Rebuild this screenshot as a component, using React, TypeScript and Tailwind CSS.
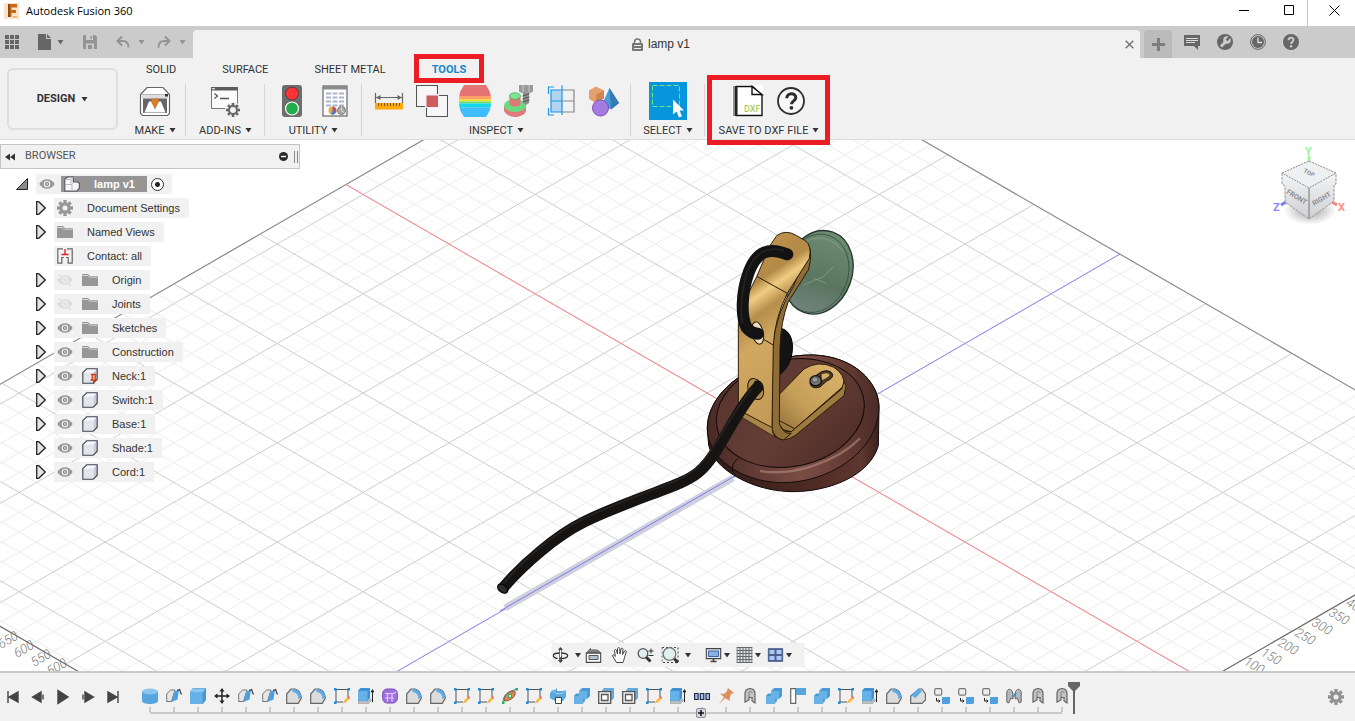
import type { ReactNode } from 'react'

type IconProps = { size?: number; className?: string; box?: string; children?: ReactNode }

function Svg({ size = 16, className = '', box, children }: IconProps) {
  return (
    <svg width={size} height={size} viewBox={box ?? `0 0 ${size} ${size}`} fill="none" className={`shrink-0 ${className}`} aria-hidden="true">
      {children}
    </svg>
  )
}

function Caret({ className = 'text-[#333]' }: { className?: string }) {
  return (
    <svg width="7" height="5" viewBox="0 0 7 5" className={`shrink-0 ${className}`} aria-hidden="true">
      <path d="M0.5 0h6L3.5 4.6z" fill="currentColor" />
    </svg>
  )
}

function Gear({ size = 16, color = '#8f8f8f', hole = '#f1f1f1' }: { size?: number; color?: string; hole?: string }) {
  return (
    <Svg size={size} box="0 0 16 16">
      {[0, 45, 90, 135].map((a) => (
        <rect key={a} x="6.3" y="0" width="3.4" height="16" fill={color} transform={`rotate(${a} 8 8)`} />
      ))}
      <circle cx="8" cy="8" r="5.6" fill={color} />
      <circle cx="8" cy="8" r="2.5" fill={hole} />
    </Svg>
  )
}

function Eye({ hidden = false }: { hidden?: boolean }) {
  const color = hidden ? '#dcdcdc' : '#979797'
  return (
    <Svg>
      <path d="M0.3 8C2 4.8 4.8 3.2 8 3.2S14 4.8 15.7 8C14 11.2 11.2 12.8 8 12.8S2 11.2 0.3 8z" fill={color} />
      <circle cx="8" cy="8" r="2.8" fill={color} stroke="#f1f1f1" strokeWidth="1.1" />
      <circle cx="8" cy="8" r="0.8" fill="#f1f1f1" />
      {hidden && <path d="M2 2.5l12 11.5" stroke="#f1f1f1" strokeWidth="3" />}
      {hidden && <path d="M2 2.5l12 11.5" stroke={color} strokeWidth="1.4" />}
    </Svg>
  )
}

function Folder() {
  return (
    <Svg>
      <path d="M0 2h6l2 2h8v10H0z" fill="#979797" />
      <path d="M0 3.5h6l1.5 1.7H16" stroke="#d4d4d4" />
    </Svg>
  )
}

function Body({ pinned = false }: { pinned?: boolean }) {
  return (
    <Svg>
      <path d="M0.8 4.5L4.5 0.8h10.7V11l-3.7 4.2H.8z" fill="#f6f7fa" />
      <path d="M11.5 4.5l3.7-3.7V11l-3.7 4z" fill="#c9ccd5" />
      <path d="M0.8 4.5h10.7V15H.8z" fill="#e3e5eb" />
      <path d="M0.8 4.7L4.7 0.8h10.5v10.4l-3.9 4H.8z" stroke="#3f4150" strokeWidth="1.1" />
      {pinned && <path d="M9 6.500h5.500M8.500 12h6.500M11.700 12.500V16M10.300 7v5M13.200 7v5" stroke="#c9341c" strokeWidth="1.300" />}
      {pinned && <path d="M11.700 7.200v4.200" stroke="#ffb13b" strokeWidth="1.600" />}
    </Svg>
  )
}

function ContactIcon() {
  return (
    <Svg>
      <path d="M6 .800H.800v14.400h4V9.500h2.200M10 .800h5.200v14.400h-4V9.500H9" stroke="#666" strokeWidth="1.200" />
      <path d="M8 1v5M4.500 6.500h7" stroke="#e01b1b" strokeWidth="1.300" />
    </Svg>
  )
}

function AssemblyIcon() {
  return (
    <Svg>
      <path d="M.800 3.500L3.300 1h6v5h4.500l1.500 1.500V12L12.800 15H.800z" fill="#f8f8fb" stroke="#55565f" strokeWidth="1.100" />
      <path d="M1 8.500h7V15M8 8.500L10 6.300M1 3.500h6v5M7 3.500L9.500 1" stroke="#b7b9c3" />
    </Svg>
  )
}

/* ---------- ribbon icons, 32px ---------- */

const MakeIcon = () => (
  <Svg size={32}>
    <path d="M1.500 9.500L8 2.500h16l6.500 7v19l-2 2h-25l-2-2z" fill="#fff" stroke="#666" strokeWidth="1.200" />
    <path d="M2.500 9.500h27v4h-27z" fill="#dedede" />
    <path d="M2 9.500h28" stroke="#aaa" strokeWidth=".800" />
    <path d="M4 13.500h24V28H4z" fill="#666" />
    <path d="M5.500 27.500l4.500-11h2.500l3.500 8 3.500-8H22l4.500 11z" fill="#fff" />
    <path d="M12.500 13.500h7V18L16 23l-3.500-5z" fill="#dd7d2c" />
    <path d="M26 9h3v2.500h-3z" fill="#333" />
  </Svg>
)

const AddInsIcon = () => (
  <Svg size={32}>
    <path d="M1.500 2.500h26v21h-26z" fill="#fbfbfb" stroke="#777" />
    <path d="M1 2h27v3.500H1z" fill="#5c5c5c" />
    <path d="M2 3.700h3" stroke="#ddd" strokeWidth="1.300" />
    <path d="M4.500 8.500L7.500 11l-3 2.500M10 13.500h9" stroke="#555" strokeWidth="1.300" />
    <circle cx="23" cy="25" r="8" fill="#f1f1f1" />
    {[0, 45, 90, 135].map((a) => (
      <path key={a} d="M23 18v14" stroke="#666" strokeWidth="2.600" transform={`rotate(${a} 23 25)`} />
    ))}
    <circle cx="23" cy="25" r="4" fill="#f4f4f4" stroke="#666" strokeWidth="2" />
  </Svg>
)

const TrafficIcon = () => (
  <Svg size={32}>
    <rect x="6" y="0" width="20" height="32" rx="3" fill="#6d6d6d" />
    <circle cx="16" cy="8.500" r="6.500" fill="#ff3333" stroke="#5a3a3a" />
    <circle cx="16" cy="23.500" r="6.500" fill="#22ad4b" stroke="#fff" strokeWidth="1.200" />
  </Svg>
)

const SheetIcon = () => (
  <Svg size={32}>
    <rect x="4" y="1" width="24" height="30" fill="#fff" stroke="#666" strokeWidth="1.200" />
    <path d="M4 1h24v3.500H4z" fill="#8b8b8b" />
    <path d="M7 8.500h18M7 12.500h18M7 16.500h18M7 20.500h18" stroke="#aab4cf" strokeWidth="2" strokeDasharray="5 1.500" />
    <circle cx="13.500" cy="25.500" r="4" fill="#d9af47" />
    <path d="M13.500 25.500v-4a4 4 0 0 1 3.600 5.800z" fill="#b04d7b" />
    <path d="M13.500 25.500l3.600 1.800a4 4 0 0 1-5 2z" fill="#4a78c9" />
    <circle cx="22.500" cy="25.500" r="4" fill="#aaa" stroke="#777" />
    <path d="M22.500 25.500v-4M22.500 25.500l3 2.500" stroke="#ddd" />
  </Svg>
)

const MeasureIcon = () => (
  <Svg size={32}>
    <path d="M2.500 8v10M29.500 8v10M3 12.500h26" stroke="#666" strokeWidth="1.200" />
    <path d="M3 12.500l4.500-2.500v5zM29 12.500L24.500 10v5z" fill="#666" />
    <path d="M2 18h28v6.500H2z" fill="#ffa90a" />
    <path d="M5.500 18v3M8.500 18v3M11.500 18v3M14.500 18v3M17.500 18v3M20.500 18v3M23.500 18v3M26.500 18v3" stroke="#73572a" />
  </Svg>
)

const InterferenceIcon = () => (
  <Svg size={32}>
    <path d="M.500 .500h21v21H.500z" fill="#f7f7f7" stroke="#555" strokeWidth="1.100" />
    <path d="M10.500 10.500h21v21h-21z" fill="#f7f7f7" stroke="#555" strokeWidth="1.100" />
    <path d="M9 9h14v14H9z" fill="#f1f1f1" />
    <path d="M10.500 10.500h11.500v11.500H10.500z" fill="#cd5c5c" />
  </Svg>
)

const ZebraIcon = () => (
  <Svg size={32}>
    <clipPath id="barrel">
      <path d="M5 0h22l3.500 6c2 6 2 14 0 20L27 32H5L1.500 26c-2-6-2-14 0-20z" />
    </clipPath>
    <g clipPath="url(#barrel)">
      <path d="M0 0h32v11H0z" fill="#e57373" />
      <path d="M0 11h32v3.500H0z" fill="#ff9f68" />
      <path d="M0 14.500h32v2H0z" fill="#f3e11a" />
      <path d="M0 16.500h32v2H0z" fill="#66dc77" />
      <path d="M0 18.500h32v4H0z" fill="#12d7ec" />
      <path d="M0 22.500h32V32H0z" fill="#3fbcfb" />
    </g>
  </Svg>
)

const AccessIcon = () => (
  <Svg size={32}>
    <path d="M2 20v6c2 3.500 6 6 11 6s10-2.500 11-6v-6z" fill="#df7b7b" />
    <ellipse cx="13" cy="20.500" rx="11" ry="6.500" fill="#69dc80" />
    <path d="M7.500 11v8c1 2 3 2.500 5.500 2.500s4.500-.500 5.500-2.500v-8z" fill="#e07878" />
    <ellipse cx="13" cy="11" rx="5.500" ry="3.300" fill="#7de58f" stroke="#43b45b" strokeWidth=".800" />
    <path d="M17 0h14v6.500l-3 1.500h-8l-3-1.500z" fill="#9a9a9a" />
    <path d="M21 0v7M27 0v7" stroke="#c8c8c8" />
    <path d="M21 8h6v10l-3 2-3-2z" fill="#8d8d8d" />
    <path d="M20.500 11l7-2M20.500 14l7-2M20.500 17l7-2" stroke="#555" />
  </Svg>
)

const SectionIcon = () => (
  <Svg size={32}>
    <path d="M17 5h12v22H17M17 16h12" stroke="#888" strokeWidth="1.200" />
    <path d="M6 5h11v22H6z" fill="#b2d4ee" />
    <path d="M17 .500V30M6 5h11v22H6zM6 16h11M3.500 9V2H9M3.500 23v7H9" stroke="#1c96ea" strokeWidth="1.200" />
  </Svg>
)

const ShapesIcon = () => (
  <Svg size={32}>
    <path d="M1 5.500l7-4 8 4v8l-8 4.500-7-4z" fill="#e5a06f" />
    <path d="M8 9.500l8-4v8L8 18z" fill="#cf8653" />
    <path d="M21.500 3l9.500 15-8 6.500-9-5z" fill="#4b9cda" />
    <path d="M21.500 3L31 18l-8 6.500z" fill="#337bb3" />
    <circle cx="12.500" cy="23" r="8" fill="#a57be0" stroke="#8050c2" strokeWidth="1" />
  </Svg>
)

const SelectIcon = () => (
  <Svg size={38}>
    <path d="M0 0h38v38H0z" fill="#0796dc" />
    <path d="M3.500 3.500h27v21h-27z" stroke="#6fe28a" strokeDasharray="5 2" />
    <path d="M24 17.500v15l3.500-3 2.500 6 3-1.300-2.500-5.700h4.500z" fill="#fff" />
  </Svg>
)

const DxfIcon = () => (
  <Svg size={32}>
    <path d="M0 0h31v32H0z" fill="#fff" />
    <path d="M1 1h4v30H1z" fill="#8d8d8d" />
    <path d="M4.500 1.500h16L30 10.500v20H4.500z" fill="#fff" stroke="#111" strokeWidth="1.400" />
    <path d="M20 1.500v8h10z" fill="#fff" stroke="#111" strokeWidth="1.400" />
    <path d="M4.200 1v30" stroke="#222" strokeWidth="2.400" />
    <text x="12" y="27" fontSize="9" fill="#86c440" fontFamily="Roboto, sans-serif">DXF</text>
  </Svg>
)

const HelpIcon = () => (
  <Svg size={32}>
    <circle cx="16" cy="16" r="13" fill="#f8f8f8" stroke="#2d2d2d" strokeWidth="1.800" />
    <path d="M11.800 13.200c0-6 9-5.800 9-.500 0 3-4.300 3.300-4.300 6.500" stroke="#2d2d2d" strokeWidth="3" />
    <circle cx="16.400" cy="22.800" r="1.900" fill="#2d2d2d" />
  </Svg>
)

type Group = { label: string; width: string; highlight?: boolean; tools: { name: string; icon: ReactNode }[] }

const groups: Group[] = [
  { label: 'MAKE', width: 'w-[62px]', tools: [{ name: '3D print', icon: <MakeIcon /> }] },
  { label: 'ADD-INS', width: 'w-[79px]', tools: [{ name: 'Scripts', icon: <AddInsIcon /> }] },
  {
    label: 'UTILITY',
    width: 'w-[97px]',
    tools: [
      { name: 'Status', icon: <TrafficIcon /> },
      { name: 'Parameters', icon: <SheetIcon /> },
    ],
  },
  {
    label: 'INSPECT',
    width: 'w-[269px]',
    tools: [
      { name: 'Measure', icon: <MeasureIcon /> },
      { name: 'Interference', icon: <InterferenceIcon /> },
      { name: 'Curvature', icon: <ZebraIcon /> },
      { name: 'Accessibility', icon: <AccessIcon /> },
      { name: 'Section analysis', icon: <SectionIcon /> },
      { name: 'Component colors', icon: <ShapesIcon /> },
    ],
  },
  { label: 'SELECT', width: 'w-[74px]', tools: [{ name: 'Select', icon: <SelectIcon /> }] },
  {
    label: 'SAVE TO DXF FILE',
    width: 'w-[128px]',
    highlight: true,
    tools: [
      { name: 'Save DXF', icon: <DxfIcon /> },
      { name: 'Help', icon: <HelpIcon /> },
    ],
  },
]

const tabs = ['SOLID', 'SURFACE', 'SHEET METAL', 'TOOLS']

function TitleBar() {
  return (
    <header className="flex h-[26px] items-center bg-white pl-1">
      <Svg size={16} className="mb-1">
        <path d="M0 0h15v16H0z" fill="#fbe3cd" />
        <path d="M4 1h9v3.500H7.500V7H12v3H7.500v4H4z" fill="#c56a1c" />
        <path d="M4 1h2v13H4z" fill="#8f4a12" />
        <path d="M9 13h4v1.500H9z" fill="#f0a868" />
      </Svg>
      <h1 className="ml-1.5 flex-1 pb-1 font-['Open_Sans',sans-serif] text-[11px] text-black">Autodesk Fusion 360</h1>
      <button aria-label="Minimize" className="flex h-full w-[53px] items-start justify-center pt-1.5">
        <Svg size={10}><path d="M0 4.500h10" stroke="#000" /></Svg>
      </button>
      <button aria-label="Maximize" className="flex h-full w-[38px] items-start justify-center border-r border-[#c8c8c8] pt-[5px]">
        <Svg size={10}><path d="M.500 .500h9v9h-9z" stroke="#000" /></Svg>
      </button>
      <button aria-label="Close" className="flex h-full w-[47px] items-start justify-center pt-[5px] pl-1.5">
        <Svg size={11}><path d="M.500 .500l10 10M10.500 .500l-10 10" stroke="#000" /></Svg>
      </button>
    </header>
  )
}

function QuickAccess() {
  return (
    <div className="flex w-[193px] items-center pl-[5px] text-[#666]">
      <button aria-label="Data panel">
        <Svg size={14}>
          {[0, 5, 10].map((y) => [0, 5, 10].map((x) => <rect key={`${x}-${y}`} x={x} y={y} width="4" height="4" fill="#666" />))}
        </Svg>
      </button>
      <button aria-label="File" className="ml-[19px] flex items-center gap-[5px]">
        <Svg size={16} className="-mr-0.5"><path d="M0 0h8v5h5v11H0zM9 0l4 4H9z" fill="#666" /></Svg>
        <Caret className="text-[#666]" />
      </button>
      <button aria-label="Save" className="ml-[19px]">
        <Svg size={14}>
          <path d="M0 0h12l2 2v12H0z" fill="#949494" />
          <path d="M3 0h7v5H3zM3 8.500h8V14H3z" fill="#cbcbcb" />
          <path d="M7.500 1h1.500v3H7.500zM5 10h4v4H5z" fill="#949494" />
        </Svg>
      </button>
      <button aria-label="Undo" className="ml-[19px] flex items-center gap-2">
        <Svg size={14}><path d="M6 1.500L1.500 6 6 10.500M2 6h5c3.500 0 5.500 2 5.500 6.500" stroke="#949494" strokeWidth="2" /></Svg>
        <Caret className="text-[#949494]" />
      </button>
      <button aria-label="Redo" className="ml-3 flex items-center gap-2">
        <Svg size={14}><path d="M8 1.500L12.500 6 8 10.500M12 6H7C3.500 6 1.500 8 1.500 12.500" stroke="#949494" strokeWidth="2" /></Svg>
        <Caret className="text-[#949494]" />
      </button>
    </div>
  )
}

function DocumentBar() {
  return (
    <div className="flex h-8 bg-[#cbcbcb]">
      <QuickAccess />
      <div className="mt-1 flex flex-1 items-center rounded-t bg-[#f1f1f1]">
        <div className="flex flex-1 items-center justify-center gap-1 pl-2.5 text-[12px] text-[#333]">
          <Svg size={13}>
            <path d="M3.500 6V4c0-4 6-4 6 0v2" stroke="#777" strokeWidth="1.500" />
            <rect x="1" y="5" width="11" height="8" rx="1" fill="#777" />
            <path d="M3 7.500h7M3 10.500h7" stroke="#eee" />
          </Svg>
          lamp v1
        </div>
        <button aria-label="Close tab" className="flex w-[22px] justify-center">
          <Svg size={9}><path d="M.700 .700l7.600 7.600M8.300 .700L.700 8.300" stroke="#777" strokeWidth="1.500" /></Svg>
        </button>
      </div>
      <button aria-label="New tab" className="mt-1 ml-1 flex w-7 items-center justify-center rounded-t bg-[#bbb]">
        <Svg size={13}><path d="M6.500 0v13M0 6.500h13" stroke="#7d7d7d" strokeWidth="3" /></Svg>
      </button>
      <div className="flex items-center gap-[17px] pr-14 pl-3">
        <button aria-label="Comments">
          <Svg><path d="M0 1h16v11h-2v4l-4-4H0z" fill="#666" /><path d="M2 4.500h12M2 6.500h12M2 8.500h9" stroke="#ddd" /></Svg>
        </button>
        <button aria-label="Extensions">
          <Svg>
            <circle cx="8" cy="8" r="8" fill="#666" />
            <path d="M4 12.500l4.500-4.500" stroke="#cbcbcb" strokeWidth="3" />
            <circle cx="10" cy="6" r="3.800" fill="#cbcbcb" />
            <path d="M9.500 6.500L13 2.500" stroke="#666" strokeWidth="2.500" />
          </Svg>
        </button>
        <button aria-label="Job status">
          <Svg>
            <circle cx="8" cy="8" r="7.400" stroke="#666" />
            <circle cx="8" cy="8" r="6" fill="#666" />
            <path d="M8 3.500V8.500h4" stroke="#ddd" strokeWidth="1.400" />
          </Svg>
        </button>
        <button aria-label="Help">
          <Svg>
            <circle cx="8" cy="8" r="8" fill="#666" />
            <path d="M5.500 6.200c0-3.500 5-3.300 5-.300 0 1.900-2.400 2-2.400 4" stroke="#ccc" strokeWidth="1.900" />
            <circle cx="8.100" cy="12.300" r="1.200" fill="#ccc" />
          </Svg>
        </button>
      </div>
    </div>
  )
}

function Ribbon() {
  return (
    <div className="relative z-10 flex h-[82px] border-b border-[#dcdcdc] bg-[#f1f1f1] font-[Roboto,sans-serif] text-[11px] text-[#333]">
      <button className="mt-2.5 ml-[7px] flex h-[62px] w-[111px] items-center justify-center gap-1.5 rounded-md border-2 border-[#dedede] font-bold">
        DESIGN <Caret />
      </button>
      <div className="ml-1.5">
        <nav className="flex h-6 items-center gap-[46px] pl-[22px]">
          {tabs.map((tab) =>
            tab === 'TOOLS' ? (
              <a key={tab} href="#tools" className="relative font-bold text-[#1489cc]">
                {tab}
                <span className="absolute -inset-x-[18px] -top-2 h-[29px] border-5 border-[#ec1c24]" />
              </a>
            ) : (
              <a key={tab} href={`#${tab}`}>{tab}</a>
            ),
          )}
        </nav>
        <div className="flex pt-0.5">
          {groups.map((group) => (
            <div key={group.label} className={`relative flex flex-col items-center ${group.width}`}>
              <div className="flex h-[34px] items-center gap-[11px]">
                {group.tools.map((tool) => (
                  <button key={tool.name} aria-label={tool.name}>{tool.icon}</button>
                ))}
              </div>
              <button className="mt-[5px] flex h-4 items-center gap-1 whitespace-nowrap">
                {group.label} <Caret className="mb-0.5 text-[#333]" />
              </button>
              {group.highlight ? (
                <span className="absolute -top-[9px] left-0.5 h-[70px] w-[123px] border-5 border-[#ec1c24]" />
              ) : (
                <span className="absolute top-0 right-0 h-[52px] w-px bg-[#d6d6d6]" />
              )}
            </div>
          ))}
        </div>
      </div>
    </div>
  )
}

/* ---------- canvas ---------- */

// Grid lines run at 30 degrees; a line is known by its offset from the origin row or column.
const K = 0.5774
const STEP = 19.86
const X_AXIS = -15.2
const Z_AXIS = 900.7
const rows = Array.from({ length: 51 }, (_, i) => i - 26)
const cols = Array.from({ length: 52 }, (_, i) => i - 19)

function segment(up: [number, number], down: [number, number]) {
  const at = (c: number, d: number) => `${((c - d) / (2 * K)).toFixed(1)} ${((c + d) / 2).toFixed(1)}`
  return `M${at(up[0], down[0])}L${at(up[1], down[1])}`
}

const UP_MIN = Z_AXIS - 26 * STEP
const UP_MAX = Z_AXIS + 24 * STEP
const DOWN_MIN = X_AXIS - 19 * STEP
const DOWN_MAX = X_AXIS + 32.3 * STEP

const rowLine = (n: number) => segment([Z_AXIS + n * STEP, Z_AXIS + n * STEP], [DOWN_MIN, DOWN_MAX])
const colLine = (n: number) => segment([UP_MIN, UP_MAX], [X_AXIS + n * STEP, X_AXIS + n * STEP])

const minor = [...rows.filter((n) => n % 5).map(rowLine), ...cols.filter((n) => n % 5).map(colLine)].join('')
const major = [...rows.filter((n) => n % 5 === 0).map(rowLine), ...cols.filter((n) => n % 5 === 0).map(colLine)].join('')

const rulerMarks = [
  { x: 1243, y: 664, text: '100' },
  { x: 1260, y: 655, text: '150' },
  { x: 1277, y: 645, text: '200' },
  { x: 1294, y: 635, text: '250' },
  { x: 1311, y: 625, text: '300' },
  { x: 1328, y: 615, text: '350' },
  { x: 1345, y: 605, text: '400' },
]

const leftMarks = [
  { x: 1, y: 649, text: '650' },
  { x: 17, y: 658, text: '600' },
  { x: 34, y: 667, text: '550' },
  { x: 50, y: 676, text: '500' },
]

function Lamp() {
  return (
    <g>
      <defs>
        <linearGradient id="wood" x1="0" y1="0" x2="1" y2="1">
          <stop offset="0" stopColor="#55332c" />
          <stop offset=".5" stopColor="#643d35" />
          <stop offset="1" stopColor="#4b2b26" />
        </linearGradient>
        <linearGradient id="rim" x1="0" y1="0" x2="1" y2="0">
          <stop offset="0" stopColor="#4a2a25" />
          <stop offset=".55" stopColor="#7a4d44" />
          <stop offset=".8" stopColor="#653c34" />
          <stop offset="1" stopColor="#4a2b27" />
        </linearGradient>
        <linearGradient id="side" x1="0" y1="0" x2="1" y2="0">
          <stop offset="0" stopColor="#2f1a17" />
          <stop offset=".6" stopColor="#4e2a24" />
          <stop offset=".9" stopColor="#5e372f" />
          <stop offset="1" stopColor="#3b201c" />
        </linearGradient>
        <linearGradient id="brass" x1="0" y1="0" x2=".25" y2="1">
          <stop offset="0" stopColor="#c79e55" />
          <stop offset=".2" stopColor="#b88e49" />
          <stop offset=".3" stopColor="#b38a47" />
          <stop offset=".37" stopColor="#f0cc82" />
          <stop offset=".46" stopColor="#b68e4d" />
          <stop offset=".6" stopColor="#d0a860" />
          <stop offset="1" stopColor="#c49b56" />
        </linearGradient>
        <linearGradient id="foot" x1="0" y1="1" x2="1" y2="0">
          <stop offset="0" stopColor="#8e6e38" />
          <stop offset=".4" stopColor="#c59e58" />
          <stop offset="1" stopColor="#dcb56e" />
        </linearGradient>
        <linearGradient id="glass" x1="0" y1="0" x2="0" y2="1">
          <stop offset="0" stopColor="#6d8c72" />
          <stop offset=".6" stopColor="#5a765f" />
          <stop offset="1" stopColor="#72837f" />
        </linearGradient>
      </defs>

      <path d="M505 608L733 478" stroke="#d0cfdd" strokeWidth="7" />
      <path d="M500 611L740 473" stroke="#7d7dea" />

      {/* model space of the lamp is three times the canvas */}
      <g transform="translate(680 215) scale(.33333)" strokeLinejoin="round">
        <path d="M82 645C78 520 240 418 400 420C520 424 598 500 597 580L595 692C570 780 450 832 330 830C210 826 100 760 86 690Z" fill="url(#side)" stroke="#0f0908" strokeWidth="3" />
        <path d="M82 645C78 520 240 418 400 420C520 424 598 500 597 580C592 715 440 806 300 803C180 798 85 730 82 645Z" fill="url(#rim)" stroke="#150c0a" strokeWidth="3" />
        <path d="M240 768C340 785 470 740 540 670" stroke="#c09a90" strokeWidth="7" opacity=".5" />
        <ellipse cx="331" cy="594" rx="224" ry="160" transform="rotate(-12 331 594)" fill="url(#wood)" stroke="#120a08" strokeWidth="3" />
        <path d="M175 730C160 742 156 752 158 770" stroke="#120a08" strokeWidth="3" />

        <ellipse cx="415" cy="172" rx="101" ry="128" transform="rotate(20 415 172)" fill="url(#glass)" stroke="#27372b" strokeWidth="4" />
        <ellipse cx="408" cy="175" rx="96" ry="120" transform="rotate(20 408 175)" stroke="#2c4a33" strokeWidth="2" />
        <path d="M380 80C410 60 455 66 490 110M370 210l60-25 30-30M400 190l40 15" stroke="#9dbaa2" strokeWidth="3" opacity=".45" />

        <path d="M300 340C350 345 350 440 300 478Z" fill="#141414" stroke="#000" strokeWidth="3" />

        <path d="M296 540L372 462Q415 435 460 456Q496 478 492 512L334 650L290 640Z" fill="url(#foot)" stroke="#2a1c08" strokeWidth="3" />
        <path d="M492 500L498 512L492 542L345 662Q310 685 285 665L278 630L300 630Q312 655 334 650L485 522Z" fill="#9c7a40" stroke="#2a1c08" strokeWidth="3" />
        <path d="M300 618L342 640" stroke="#2a1c08" strokeWidth="3" />
        <path d="M395 490L425 470Q450 462 458 478Q460 490 440 498L420 516Q395 524 390 505Z" fill="#4a3a1e" stroke="#111" strokeWidth="3" />
        <path d="M425 478Q448 470 448 482Q440 490 425 496Z" fill="#d4ae69" />
        <ellipse cx="407" cy="497" rx="17" ry="15" fill="#777" stroke="#111" strokeWidth="4" />
        <ellipse cx="405" cy="494" rx="9" ry="8" fill="#9b9b9b" stroke="#333" strokeWidth="2" />

        <path d="M388 95Q397 120 385 165L325 260Q302 320 300 400L298 625Q310 660 334 655L310 675Q282 670 276 640L278 390Q290 290 340 215Z" fill="#8e6d38" stroke="#2a1c08" strokeWidth="3" />
        <path d="M290 62Q318 42 350 62L376 77Q396 92 388 130L322 235Q284 310 280 390L276 638L185 590L175 560V325Q190 260 230 185L270 92Z" fill="url(#brass)" stroke="#2a1c08" strokeWidth="3" />
        <path d="M185 590L188 608L285 666Q276 655 276 638Z" fill="#a98347" stroke="#2a1c08" strokeWidth="2" />
        <path d="M230 184L322 235M238 366L280 390" stroke="#2a1c08" strokeWidth="3" />
        <ellipse cx="233" cy="354" rx="17" ry="34" transform="rotate(-12 233 354)" fill="#e9dcc2" stroke="#2a1c08" strokeWidth="3" />
        <ellipse cx="227" cy="522" rx="22" ry="33" transform="rotate(-22 227 522)" fill="#b08a4a" stroke="#2a1c08" strokeWidth="3" />
        <path d="M322 118C265 95 230 110 207 170C182 235 184 310 200 338C210 350 222 356 234 356" stroke="#141313" strokeWidth="36" strokeLinecap="round" />
        <path d="M312 107C262 92 226 112 202 168C184 225 179 290 188 325" stroke="#3a3836" strokeWidth="5" opacity=".45" />
        <path d="M236 514C190 560 150 640 110 705C70 770 40 786 0 804C-60 830 -210 880 -290 922C-370 962 -470 1046 -532 1120" stroke="#151413" strokeWidth="34" />
        <ellipse cx="236" cy="512" rx="13" ry="18" transform="rotate(-35 236 512)" fill="#151413" />
        <path d="M215 522C175 570 135 640 98 698C58 762 30 776 -5 794C-62 818 -210 872 -294 913C-372 952 -470 1034 -532 1108" stroke="#3b3937" strokeWidth="5" opacity=".45" />
        <ellipse cx="-532" cy="1121" rx="11" ry="17" transform="rotate(-52 -532 1121)" fill="#2d2c2b" stroke="#050505" strokeWidth="4" />
      </g>
    </g>
  )
}

function Scene() {
  return (
    <svg className="absolute inset-0 h-full w-full" viewBox="0 140 1355 531" preserveAspectRatio="xMidYMid slice" fill="none" aria-label="lamp v1 model">
      <path d={minor} stroke="#ececec" />
      <path d={major} stroke="#cdcdcd" />
      <path d={segment([UP_MIN, UP_MIN], [DOWN_MIN, DOWN_MAX])} stroke="#8c8c8c" strokeWidth="1.2" />
      <path d={segment([UP_MAX, UP_MAX], [DOWN_MIN, DOWN_MAX])} stroke="#6c6c6c" strokeWidth="1.2" />
      <path d={segment([UP_MIN, UP_MAX], [DOWN_MIN, DOWN_MIN])} stroke="#8c8c8c" strokeWidth="1.2" />
      <path d={segment([UP_MIN, UP_MAX], [DOWN_MAX, DOWN_MAX])} stroke="#6c6c6c" strokeWidth="1.2" />
      <path d={colLine(0)} stroke="#ff8080" />
      <path d={rowLine(0)} stroke="#8a8af8" />
      <g fill="#777" fontSize="13" fontStyle="italic" fontWeight="300" fontFamily="Roboto, sans-serif">
        {rulerMarks.map((m) => (
          <text key={m.text} x={m.x} y={m.y} transform={`rotate(30 ${m.x} ${m.y})`}>{m.text}</text>
        ))}
        {leftMarks.map((m) => (
          <text key={m.text} x={m.x} y={m.y} transform={`rotate(-30 ${m.x} ${m.y})`}>{m.text}</text>
        ))}
      </g>
      <Lamp />
    </svg>
  )
}

function ViewCube() {
  return (
    <svg className="absolute top-0.5 right-[3px]" width="84" height="92" viewBox="1268 142 84 92" fill="none" aria-label="View cube">
      <defs>
        <radialGradient id="cubeShadow">
          <stop offset="0" stopColor="#777" stopOpacity=".7" />
          <stop offset="1" stopColor="#777" stopOpacity="0" />
        </radialGradient>
        <linearGradient id="cubeFace" x1="0" y1="0" x2="0" y2="1">
          <stop offset="0" stopColor="#f3f4f5" />
          <stop offset="1" stopColor="#cfd0d2" />
        </linearGradient>
      </defs>
      <ellipse cx="1310" cy="210" rx="26" ry="15" fill="url(#cubeShadow)" />
      <path d="M1309 162v-6" stroke="#8dfb8d" strokeWidth="2.5" />
      <path d="M1286 202l-5 3" stroke="#7a7aff" strokeWidth="3" />
      <path d="M1332 202l5 3" stroke="#ff8080" strokeWidth="3" />
      <path d="M1282 173l27 15v31l-24-17v-16l-3-2z" fill="url(#cubeFace)" />
      <path d="M1336 173l-27 15v31l25-18v-16l2-1z" fill="url(#cubeFace)" />
      <path d="M1282 173l27-12 27 12-27 15z" fill="#eff0f1" stroke="#888" strokeDasharray="2 1" />
      <path d="M1309 188v31" stroke="#777" />
      <path d="M1282 173v11l3 2v16l24 17 25-18v-16l2-1v-11" stroke="#999" strokeDasharray="3 1" />
      <g fontFamily="Roboto, sans-serif" fontWeight="700">
        <g fill="#8a9098" fontSize="7">
          <text x="1286" y="193" transform="rotate(32 1286 193)">FRONT</text>
          <text x="1314" y="206" transform="rotate(-31 1314 206)">RIGHT</text>
          <text x="1303" y="172" fontSize="6" transform="rotate(27 1303 172)">TOP</text>
        </g>
        <g fontSize="11">
          <text x="1305" y="155" fill="#8dfb8d">Y</text>
          <text x="1273" y="211" fill="#8a8aff">Z</text>
          <text x="1338" y="211" fill="#ff8f8f">X</text>
        </g>
      </g>
    </svg>
  )
}

type Node = { name: string; icon: ReactNode; eye?: 'on' | 'off'; leaf?: boolean }

const tree: Node[] = [
  { name: 'Document Settings', icon: <Gear color="#979797" /> },
  { name: 'Named Views', icon: <Folder /> },
  { name: 'Contact: all', icon: <ContactIcon />, leaf: true },
  { name: 'Origin', icon: <Folder />, eye: 'off' },
  { name: 'Joints', icon: <Folder />, eye: 'off' },
  { name: 'Sketches', icon: <Folder />, eye: 'on' },
  { name: 'Construction', icon: <Folder />, eye: 'on' },
  { name: 'Neck:1', icon: <Body pinned />, eye: 'on' },
  { name: 'Switch:1', icon: <Body />, eye: 'on' },
  { name: 'Base:1', icon: <Body />, eye: 'on' },
  { name: 'Shade:1', icon: <Body />, eye: 'on' },
  { name: 'Cord:1', icon: <Body />, eye: 'on' },
]

function Browser() {
  return (
    <aside className="absolute top-1 left-0 w-[300px] text-[11px] text-[#333]">
      <div className="flex h-[25px] items-center border border-[#c4c4c4] bg-[#f1f1f1] pl-1 font-[Roboto,sans-serif] text-[#555]">
        <Svg size={10}><path d="M5 1.500v7L0 5zM10 1.500v7L5 5z" fill="#333" /></Svg>
        <h2 className="ml-2.5 flex-1">BROWSER</h2>
        <button aria-label="Collapse" className="mr-1.5">
          <Svg size={9}><circle cx="4.500" cy="4.500" r="4.500" fill="#2b2b2b" /><path d="M2 4.500h5" stroke="#fff" strokeWidth="1.400" /></Svg>
        </button>
        <span className="mr-px h-3 w-1 border-x border-[#888]" />
      </div>
      <ul className="mt-[5px] flex flex-col gap-1">
        <li className="flex h-5 items-center pl-4">
          <Svg size={12}><path d="M11.500 .500v11H.500z" fill="#8a8a8a" stroke="#222" /></Svg>
          <div className="ml-2 flex h-full items-center bg-[#f1f1f1] pr-2 pl-[3px]">
            <Eye />
            <div className="ml-1.5 flex h-4 items-center bg-[#959595] pr-3 pl-[3px] font-bold text-white">
              <AssemblyIcon />
              <span className="ml-3.5">lamp v1</span>
            </div>
            <input type="radio" aria-label="Activate lamp v1" defaultChecked className="ml-1 size-[13px] appearance-none rounded-full border border-[#333] bg-[radial-gradient(circle,#222_2px,#fff_3px)]" />
          </div>
        </li>
        {tree.map((node) => (
          <li key={node.name} className="flex h-5 items-center pl-[35px]">
            <button aria-label={`Expand ${node.name}`} className={node.leaf ? 'invisible' : ''}>
              <Svg size={14}><path d="M1.700 .700v12.600h2L10.300 7 3.700 .700z" fill="#e4e4ec" stroke="#222" strokeWidth="1.300" /></Svg>
            </button>
            <div className="ml-[5px] flex h-full items-center bg-[#f1f1f1] pr-[9px] pl-[3px]">
              {node.eye && <span className="mr-[9px]"><Eye hidden={node.eye === 'off'} /></span>}
              {node.icon}
              <span className="ml-3.5">{node.name}</span>
            </div>
          </li>
        ))}
      </ul>
    </aside>
  )
}

function NavBar() {
  return (
    <div className="absolute bottom-1 left-1/2 flex h-6 w-[253px] -translate-x-1/2 items-center bg-[#f1f1f1] pl-px">
      <button aria-label="Orbit" className="flex items-center gap-1.5">
        <Svg>
          <path d="M5 11.500C2 11 .800 9.500 .800 8.500 .800 5.500 15.200 5 15.200 8.500c0 2-3 3-7 3" stroke="#333" strokeWidth="1.400" />
          <path d="M7 1.500v13h2v-13z" fill="#fff" stroke="#555" strokeWidth=".800" />
          <path d="M8 0l2.500 3h-5zM8 16l-2.500-3h5zM6.500 11.500L9.500 9v5z" fill="#444" />
        </Svg>
        <Caret />
      </button>
      <button aria-label="Look at" className="ml-1">
        <Svg>
          <path d="M.700 6h14.600v9.300H.700z" fill="#fff" stroke="#444" strokeWidth="1.300" />
          <path d="M3.500 8.500h9v4h-9z" fill="#b9c3cc" stroke="#555" />
          <path d="M2 5l3-3.500V3h7L14 5z" fill="#aaa" stroke="#555" />
        </Svg>
      </button>
      <button aria-label="Pan" className="ml-2.5">
        <Svg>
          <path d="M5 15.500C3.500 13 2 10.500.800 8.500c.500-1.200 2-.500 3 1L3 3.500c.500-1.500 1.700-1 2 0L6 7V1.500C6.500.300 8 .300 8.300 1.500L8.500 7l1-5c.500-1.300 2-1 2 .500L11 7.500 13 4c.800-1 2-.300 1.700.800L13 10.500c-.500 2-1 3.500-1.500 5z" fill="#fff" stroke="#3f3f3f" />
        </Svg>
      </button>
      <button aria-label="Zoom" className="ml-[9px]">
        <Svg size={18} box="0 0 18 16">
          <path d="M9 9.500l5 5" stroke="#333" strokeWidth="3" />
          <circle cx="6.500" cy="6.500" r="4.800" fill="#dceef2" stroke="#555" strokeWidth="1.300" />
          <path d="M12 4h5M14.500 1.500v5M12 8.500h5" stroke="#333" />
        </Svg>
      </button>
      <button aria-label="Fit" className="ml-[7px] flex items-center gap-[5px]">
        <Svg size={18}>
          <path d="M.500 1.500h16v15H.500z" stroke="#444" strokeDasharray="2 2" />
          <path d="M11.500 11.500l5 5" stroke="#333" strokeWidth="3" />
          <circle cx="8" cy="8" r="6.300" fill="#dff0ee" stroke="#777" strokeWidth="1.300" />
        </Svg>
        <Caret />
      </button>
      <button aria-label="Display settings" className="ml-3.5 flex items-center gap-0.5">
        <Svg>
          <path d="M.700 1.700h14.600v10H.700z" fill="#dfe6ee" stroke="#444" strokeWidth="1.300" />
          <path d="M3 4h10v5.500H3z" fill="#8fb2e3" stroke="#3d64a8" />
          <path d="M5 14.500h6M8 12v2.500" stroke="#444" strokeWidth="1.600" />
        </Svg>
        <Caret />
      </button>
      <button aria-label="Grid and snaps" className="ml-1.5 flex items-center gap-0.5">
        <Svg>
          <path d="M0 0h16v16H0z" fill="#dde2ea" />
          <path d="M.500 0v16M3.500 0v16M6.500 0v16M9.500 0v16M12.500 0v16M15.500 0v16M0 .500h16M0 3.500h16M0 6.500h16M0 9.500h16M0 12.500h16M0 15.500h16" stroke="#666" />
        </Svg>
        <Caret />
      </button>
      <button aria-label="Viewports" className="ml-1.5 flex items-center gap-0.5">
        <Svg>
          <path d="M.700 1.700h14.600v12.600H.700z" fill="#4c5f8d" stroke="#4c5f8d" />
          <path d="M2 3h5v4H2zM9 3h5v4H9zM2 9h5v4H2zM9 9h5v4H9z" fill="#a9c9f3" />
        </Svg>
        <Caret />
      </button>
    </div>
  )
}

/* ---------- timeline ---------- */

type Feature =
  | 'cylinder' | 'plane' | 'box' | 'move' | 'fillet' | 'sketch' | 'extrude' | 'form' | 'loft' | 'cut' | 'combine'
  | 'shell' | 'pattern' | 'pin' | 'rigid' | 'flange' | 'chamfer' | 'component' | 'joint'

const drawings: Record<Feature, ReactNode> = {
  cylinder: (
    <>
      <path d="M0 3v10c0 4 16 4 16 0V3z" fill="#56a5de" />
      <ellipse cx="8" cy="3.500" rx="8" ry="3" fill="#8ac5ee" />
    </>
  ),
  plane: (
    <>
      <path d="M.700 13.500V6L4.500 2H9l-3.500 11.500z" fill="#e6e6e6" stroke="#777" />
      <path d="M8.500 3.500l4.500-1.500-1.500 9.500L5.500 14z" fill="#4d9fe0" />
      <path d="M11 2.500l2.500-1 2 5" stroke="#333" strokeWidth="1.200" />
    </>
  ),
  box: (
    <>
      <path d="M0 3.500L3 0h13v12l-3 4H0z" fill="#4898d6" />
      <path d="M0 4h12.500v12H0z" fill="#66b2e8" />
      <path d="M0 4l3-3.500h13L12.500 4z" fill="#8cc8f0" />
    </>
  ),
  move: (
    <>
      <path d="M8 2v12M2 8h12" stroke="#222" strokeWidth="1.500" />
      <path d="M8 0l2.500 3.500h-5zM8 16l2.500-3.500h-5zM0 8l3.500-2.500v5zM16 8l-3.500-2.500v5z" fill="#222" />
    </>
  ),
  fillet: (
    <>
      <path d="M.700 15.300V6L5 1h4c4 1 6 4 6.300 9l-3 5.300z" fill="#dcdcdc" stroke="#666" strokeWidth="1.200" />
      <path d="M7 .800c5 .500 8 4 8.500 8.500L12.500 11c0-4-2-6.500-6.500-7.500z" fill="#5babe6" />
    </>
  ),
  sketch: (
    <>
      <path d="M2 1.500h12v8M2 1.500v12.500h7" stroke="#555" />
      <path d="M0 0h2.500v2.500H0zM13.500 0H16v2.500h-2.500zM0 13.500h2.500V16H0z" fill="#1590ea" />
      <path d="M9 15.500l1-3 3.500-3.500 2 2L12 14.500z" fill="#f6bd4d" />
      <path d="M13.300 9l1-1 2 2-1 1z" fill="#f2555a" />
    </>
  ),
  extrude: (
    <>
      <path d="M0 13h10l3-2v2l-3 3H0z" fill="#c6c6c6" stroke="#888" strokeWidth=".600" />
      <path d="M0 2.500L2.500 0H12v10l-2.500 3H0z" fill="#3d91d2" />
      <path d="M0 3h9.500v10H0z" fill="#66b2e8" />
      <path d="M14.500 14V3M13 4.500l1.500-3 1.500 3" stroke="#222" />
    </>
  ),
  form: (
    <>
      <rect x=".700" y="1" width="14.600" height="14" rx="4.500" fill="#a070dc" stroke="#7a45bd" />
      <path d="M3 5.500h9l2-1.500M3 10h9M5.500 5v9M10 5v9" stroke="#e0ccf7" strokeWidth="1.200" />
    </>
  ),
  loft: (
    <>
      <path d="M2.500 13C2 6 7 3 13 3.500 14.500 8 9 13 2.500 13z" fill="#d78a56" stroke="#8b5a38" />
      <path d="M1 14.500C1 8 5 3 14.500 1.500" stroke="#666" />
      <path d="M13.500 0H16v2.500h-2.500zM0 13.500h2.500V16H0zM6 6h4v4H6z" fill="#1eb556" />
      <path d="M7 7h2v2H7z" fill="#fff" />
    </>
  ),
  cut: (
    <>
      <path d="M0 5l2-3h3L7 0v3h6l3-1v7l-3 4H5L0 10z" fill="#5aa8e0" />
      <path d="M0 5l3-2.500 3 3h7l3-3" stroke="#a1d1f2" />
      <path d="M5.500 9.500h6v6h-6z" fill="#fff" stroke="#444" />
    </>
  ),
  combine: (
    <>
      <path d="M0 8l2-2.500h3V3l3-3h8v8l-3 3h-2v2l-3 3H0z" fill="#4b9ad6" />
      <path d="M0 8h5V3h8v8h-4v5H0z" fill="#68b2e8" />
    </>
  ),
  shell: (
    <>
      <path d="M4 2.500L6 0h10v10l-3 3z" fill="#63a9dd" />
      <path d="M.700 3.700h12v11.600H.700z" fill="#f4f4f4" stroke="#555" strokeWidth="1.300" />
      <path d="M3.500 6.500h6.500v6H3.500z" fill="#fff" stroke="#555" strokeWidth="1.300" />
    </>
  ),
  pattern: <path d="M.600 5.500h3.500v6H.600zM6.300 5.500h3.500v6H6.300zM12 5.500h3.500v6H12z" fill="#a8bfe5" stroke="#1d2d4d" strokeWidth="1.200" />,
  pin: <path d="M10 0l6 5-3 1-1.500 4.500.500 2.500-5-3-6 6 5-7-4-3.500 4 .500L8.500 4z" fill="#dc8f5b" />,
  rigid: (
    <>
      <path d="M3 14V6.500C3 2.500 5 .700 8 .700s5 1.800 5 5.800V15l-3-2V9.500H7V12z" fill="#c4c4c4" stroke="#666" strokeWidth="1.200" />
      <path d="M7 9.500V5c0-2 3-2 3 0" stroke="#777" />
    </>
  ),
  flange: (
    <>
      <path d="M.700 .700h5v14.600h-5z" fill="#fff" stroke="#666" strokeWidth="1.200" />
      <path d="M6 0h10v7H6z" fill="#58a5de" />
    </>
  ),
  chamfer: (
    <>
      <path d="M.700 15.300V8L9 1h3l3.500 5v6L12 15.300z" fill="#dcdcdc" stroke="#666" strokeWidth="1.200" />
      <path d="M1.500 7.500l6.500-7 4 2.500-6.500 7z" fill="#5babe6" />
    </>
  ),
  component: (
    <>
      <rect x=".700" y=".700" width="7" height="6.500" rx="1.500" fill="#eee" stroke="#777" strokeWidth="1.200" />
      <path d="M2.500 10v3h3.500M4.500 11.500L6 13l-1.500 1.500" stroke="#222" />
      <path d="M8 9h8v6l-1 1H8z" fill="#4fa1de" />
    </>
  ),
  joint: (
    <>
      <path d="M.800 14V5c0-5 5-5 6 0v6l-2-1-2 5zM15.200 14V5c0-5-5-5-6 0v6l2-1 2 5z" fill="#b7b7b7" stroke="#666" />
      <path d="M7 9l3-4" stroke="#1c93ea" strokeWidth="1.500" />
    </>
  ),
}

const features: Feature[] = [
  'cylinder', 'plane', 'box', 'move', 'plane', 'plane', 'fillet', 'fillet', 'sketch', 'extrude', 'form', 'fillet', 'fillet',
  'sketch', 'sketch', 'loft', 'sketch', 'cut', 'combine', 'shell', 'shell', 'sketch', 'extrude', 'pattern', 'pin', 'rigid',
  'combine', 'flange', 'combine', 'sketch', 'extrude', 'fillet', 'chamfer', 'component', 'component', 'component', 'joint',
  'rigid', 'rigid',
]

const playback = [
  { name: 'Go to start', d: 'M3 2v12M4 8l9-5v10z' },
  { name: 'Step back', d: 'M2.500 8L11 3v10zM13 5.500v5' },
  { name: 'Play', d: 'M3 1.500v13L13 8z' },
  { name: 'Step forward', d: 'M13.500 8L5 3v10zM3 5.500v5' },
  { name: 'Go to end', d: 'M13 2v12M12 8L3 3v10z' },
]

function Timeline() {
  return (
    <footer className="flex h-[50px] items-start border-t-2 border-[#c9c9c9] bg-[#f1f1f1] pt-[15px] pl-[5px]">
      <div className="flex w-[133px] gap-[9px] pt-px">
        {playback.map((p) => (
          <button key={p.name} aria-label={p.name}>
            <Svg><path d={p.d} fill="#444" stroke="#444" strokeWidth="1.400" /></Svg>
          </button>
        ))}
      </div>
      <ol className="flex">
        {features.map((feature, i) => (
          <li key={i} className="relative flex w-6 flex-col items-center">
            <button aria-label={feature}><Svg>{drawings[feature]}</Svg></button>
            <span className="mt-[3px] h-[5px] w-0.5 bg-[#c9c9c9]" />
            <span
              className={`h-0.5 bg-[#c9c9c9] ${i === 0 ? 'w-3 self-end' : i === features.length - 1 ? 'w-3 self-start' : 'w-full'}`}
            />
            {feature === 'pattern' && (
              <button aria-label="Expand group" className="absolute top-5 left-1.5">
                <Svg size={10}>
                  <rect x=".500" y=".500" width="9" height="9" rx="1.500" fill="#d3d6de" stroke="#8b8f9b" />
                  <path d="M5 2v6M2 5h6" stroke="#111" strokeWidth="1.500" />
                </Svg>
              </button>
            )}
          </li>
        ))}
      </ol>
      <svg width="12" height="32" viewBox="0 0 12 32" className="-mt-1.5 -ml-1.5 shrink-0" aria-hidden="true">
        <path d="M0 0h12v4L7 9v23H5V9L0 4z" fill="#666" />
      </svg>
      <button aria-label="Timeline settings" className="mt-px mr-[11px] ml-auto">
        <Gear color="#919191" />
      </button>
    </footer>
  )
}

export default function App() {
  return (
    <div className="flex min-h-screen flex-col bg-white font-['Liberation_Sans',Arial,sans-serif]">
      <TitleBar />
      <DocumentBar />
      <Ribbon />
      <main className="relative min-h-[380px] flex-1">
        <div className="absolute inset-0 overflow-hidden">
          <Scene />
        </div>
        <Browser />
        <ViewCube />
        <NavBar />
      </main>
      <Timeline />
    </div>
  )
}
